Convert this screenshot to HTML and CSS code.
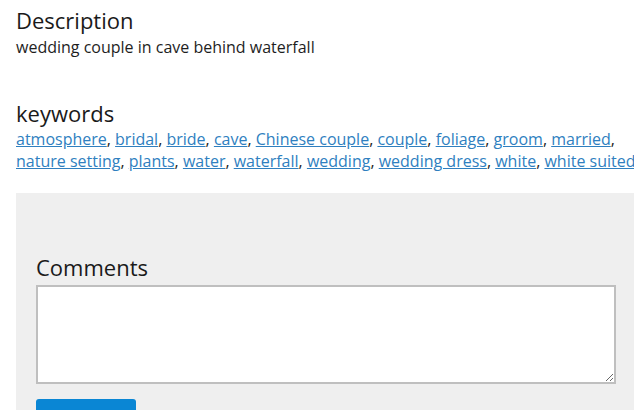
FILE: index.html
```html
<!DOCTYPE html>
<html>
<head>
<meta charset="utf-8">
<link rel="stylesheet" href="styles.css">
</head>
<body>
<div class="page">
  <section class="block">
    <h2 class="heading">Description</h2>
    <p class="desc">wedding couple in cave behind waterfall</p>
  </section>
  <section class="block keywords">
    <h2 class="heading">keywords</h2>
    <p class="links"><a href="#">atmosphere</a>, <a href="#">bridal</a>, <a href="#">bride</a>, <a href="#">cave</a>, <a href="#">Chinese couple</a>, <a href="#">couple</a>, <a href="#">foliage</a>, <a href="#">groom</a>, <a href="#">married</a>, <a href="#">nature setting</a>, <a href="#">plants</a>, <a href="#">water</a>, <a href="#">waterfall</a>, <a href="#">wedding</a>, <a href="#">wedding dress</a>, <a href="#">white</a>, <a href="#">white suited</a></p>
  </section>
  <section class="panel">
    <label class="label" for="c">Comments</label>
    <textarea id="c" class="comments"></textarea>
    <button class="submit" type="button">Submit</button>
  </section>
</div>
</body>
</html>
```
FILE: styles.css
```css
html, body {
  margin: 0;
  padding: 0;
  overflow: hidden;
  background: #fff;
}
body {
  font-family: "Open Sans", "Liberation Sans", sans-serif;
  color: #1e1e1e;
}
.page {
  padding-left: 16px;
  width: 650px;
}
.block {
  margin: 0;
}
.heading {
  font-size: 22px;
  font-weight: 400;
  line-height: 26px;
  margin: 0;
  padding-top: 7px;
  color: #1a1a1a;
}
.desc {
  font-size: 16px;
  line-height: 22px;
  margin: 3px 0 0;
}
.keywords {
  margin-top: 35px;
}
.links {
  font-size: 16px;
  line-height: 22px;
  margin: 2px 0 0;
}
.links a {
  color: #2f7fbf;
  text-decoration: underline;
}
.panel {
  margin-top: 21px;
  background: #efefef;
  padding: 61px 20px 0;
  height: 300px;
  display: flex;
  flex-direction: column;
  align-items: flex-start;
}
.label {
  font-size: 22px;
  line-height: 26px;
  color: #1a1a1a;
}
.comments {
  margin-top: 5px;
  width: 580px;
  height: 99px;
  box-sizing: border-box;
  border: 2px solid #bfbfbf;
  background: #fff;
  padding: 4px;
  font: inherit;
}
.submit {
  margin-top: 15px;
  width: 100px;
  height: 36px;
  border: 0;
  border-radius: 3px;
  background: #0a86d4;
  color: #fff;
  font-family: inherit;
  font-size: 15px;
}
```
